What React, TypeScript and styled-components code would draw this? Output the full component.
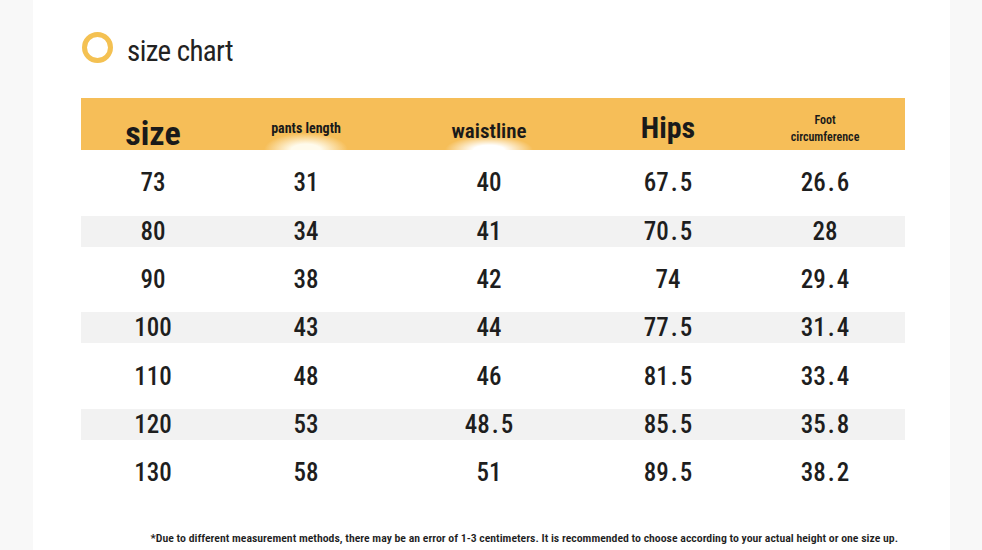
import React from "react";
import styled, { createGlobalStyle } from "styled-components";

const Global = createGlobalStyle`
  html, body { margin: 0; padding: 0; background: #f8f8f8; }
  #root { width: 982px; height: 550px; }
`;

const NARROW = `"Roboto", "DejaVu Sans Condensed", sans-serif`;
const DIGITS = `"Roboto", "DejaVu Sans Condensed", sans-serif`;

const Page = styled.div`
  width: 982px;
  height: 550px;
  background: #f8f8f8;
  display: flex;
  overflow: hidden;
`;

const Sheet = styled.div`
  margin-left: 33px;
  width: 917px;
  height: 550px;
  background: #ffffff;
  box-sizing: border-box;
  padding: 32px 45px 0 48px;
  display: flex;
  flex-direction: column;
`;

const TitleRow = styled.div`
  display: flex;
  align-items: center;
  gap: 14px;
  height: 31px;
  padding-left: 1px;
`;

const Ring = styled.div`
  width: 31px;
  height: 31px;
  box-sizing: border-box;
  border-radius: 50%;
  border: 5px solid #f4c152;
`;

const Title = styled.h1`
  margin: 0;
  font-family: ${NARROW};
  font-stretch: 75%;
  font-weight: 400;
  font-size: 29px;
  letter-spacing: -0.6px;
  line-height: 1;
  color: #222;
  padding-top: 7px;
`;

const Header = styled.div`
  margin-top: 35px;
  height: 52px;
  display: grid;
  grid-template-columns: 144px 162px 204px 154px 160px;
  background:
    radial-gradient(ellipse 42px 17px at 225px 100%, rgba(255, 251, 236, 1) 35%, rgba(255, 251, 236, 0) 100%),
    radial-gradient(ellipse 44px 14px at 408px 100%, rgba(255, 255, 255, 1) 35%, rgba(255, 255, 255, 0) 100%),
    #f6be58;
`;

const HeadCell = styled.div<{ $top: number }>`
  display: flex;
  flex-direction: column;
  align-items: center;
  padding-top: ${(p) => p.$top}px;
  box-sizing: border-box;
`;

const HeadLabel = styled.span<{ $size: number; $weight?: number }>`
  font-family: ${NARROW};
  font-stretch: 75%;
  font-size: ${(p) => p.$size}px;
  font-weight: ${(p) => p.$weight ?? 700};
  line-height: 1;
  color: #1a1a1a;
  white-space: nowrap;
`;

const SmallLabel = styled.span`
  font-family: ${NARROW};
  font-stretch: 75%;
  font-size: 12px;
  font-weight: 600;
  line-height: 16.7px;
  color: #1a1a1a;
  text-align: center;
  white-space: nowrap;
`;

const Body = styled.div`
  margin-top: 8.8px;
  display: flex;
  flex-direction: column;
`;

const Row = styled.div`
  height: 48.33px;
  display: flex;
  align-items: center;
`;

const Band = styled.div<{ $shaded: boolean }>`
  flex: 1;
  height: 31px;
  display: grid;
  grid-template-columns: 144px 162px 204px 154px 160px;
  align-items: center;
  background: ${(p) => (p.$shaded ? "#f2f2f2" : "transparent")};
`;

const Cell = styled.div`
  display: flex;
  justify-content: center;
  font-family: ${DIGITS};
  font-stretch: 86%;
  font-size: 25px;
  font-weight: 500;
  line-height: 1;
  color: #1e1e1e;
`;

const Dot = styled.span`
  margin: 0 2px;
`;

const Note = styled.p`
  margin: 36px 0 0;
  padding-right: 7px;
  text-align: right;
  font-family: ${NARROW};
  font-stretch: 75%;
  font-size: 11.8px;
  font-weight: 600;
  line-height: 1;
  color: #1e1e1e;
  white-space: nowrap;
`;

const rows: string[][] = [
  ["73", "31", "40", "67.5", "26.6"],
  ["80", "34", "41", "70.5", "28"],
  ["90", "38", "42", "74", "29.4"],
  ["100", "43", "44", "77.5", "31.4"],
  ["110", "48", "46", "81.5", "33.4"],
  ["120", "53", "48.5", "85.5", "35.8"],
  ["130", "58", "51", "89.5", "38.2"],
];

function Num({ v }: { v: string }) {
  const [a, b] = v.split(".");
  if (b === undefined) return <>{a}</>;
  return (
    <>
      {a}
      <Dot>.</Dot>
      {b}
    </>
  );
}

export default function App() {
  return (
    <Page>
      <Global />
      <Sheet>
        <TitleRow>
          <Ring />
          <Title>size chart</Title>
        </TitleRow>
        <Header>
          <HeadCell $top={17.5}>
            <HeadLabel $size={34}>size</HeadLabel>
          </HeadCell>
          <HeadCell $top={22.5}>
            <HeadLabel $size={14}>pants length</HeadLabel>
          </HeadCell>
          <HeadCell $top={23}>
            <HeadLabel $size={21} $weight={600}>waistline</HeadLabel>
          </HeadCell>
          <HeadCell $top={15}>
            <HeadLabel $size={30}>Hips</HeadLabel>
          </HeadCell>
          <HeadCell $top={14}>
            <SmallLabel>Foot</SmallLabel>
            <SmallLabel>circumference</SmallLabel>
          </HeadCell>
        </Header>
        <Body>
          {rows.map((r, i) => (
            <Row key={r[0]}>
              <Band $shaded={i % 2 === 1}>
                {r.map((v, j) => (
                  <Cell key={j}>
                    <Num v={v} />
                  </Cell>
                ))}
              </Band>
            </Row>
          ))}
        </Body>
        <Note>
          *Due to different measurement methods, there may be an error of 1-3 centimeters. It is recommended to choose according to your actual height or one size up.
        </Note>
      </Sheet>
    </Page>
  );
}
